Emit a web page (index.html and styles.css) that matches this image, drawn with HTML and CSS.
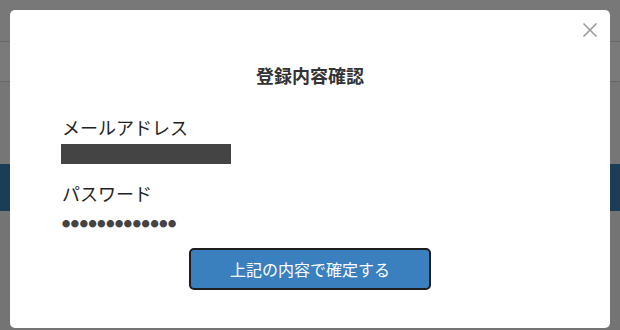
FILE: index.html
```html
<!DOCTYPE html>
<html lang="ja">
<head>
<meta charset="utf-8">
<link rel="stylesheet" href="styles.css">
</head>
<body>
<div class="page">
  <div class="hdr"></div>
  <div class="subhdr"></div>
  <div class="gap"></div>
  <div class="band"></div>
  <div class="rest"></div>
</div>
<div class="modal">
  <button class="close" aria-label="閉じる">
    <svg width="16" height="16" viewBox="0 0 16 16"><path d="M1.5 1.5L14.5 14.5M14.5 1.5L1.5 14.5" stroke="#9a9a9a" stroke-width="1.6" fill="none"/></svg>
  </button>
  <h2 class="title">登録内容確認</h2>
  <div class="label first">メールアドレス</div>
  <div class="redacted"></div>
  <div class="label second">パスワード</div>
  <div class="dots">●●●●●●●●●●●●●</div>
  <div class="actions"><button class="confirm">上記の内容で確定する</button></div>
</div>
</body>
</html>
```
FILE: styles.css
```css
html, body { margin: 0; padding: 0; }
body {
  width: 620px; height: 330px; overflow: hidden;
  background: #747474;
  font-family: "Noto Sans CJK JP", "Noto Sans", sans-serif;
  position: relative;
}
.page { display: flex; flex-direction: column; }
.hdr { height: 41px; background: #787878; border-bottom: 1px solid #676767; }
.subhdr { height: 39px; background: #7a7a7a; border-bottom: 1px solid #676767; }
.gap { height: 82px; background: #767676; }
.band { height: 47px; background: #1c3d56; }
.rest { height: 120px; background: #747474; }

.modal {
  position: absolute; left: 10px; top: 10px;
  width: 600px; height: 318px;
  background: #fff; border-radius: 5px;
  box-sizing: border-box;
  padding: 52px 52px 0;
  display: flex; flex-direction: column;
}
.close {
  position: absolute; right: 12px; top: 12px;
  width: 16px; height: 16px; padding: 0; border: 0; background: none;
  display: flex;
}
.title {
  margin: 0; text-align: center;
  font-size: 18px; line-height: 26px; font-weight: 700; color: #333;
}
.label { font-size: 18px; line-height: 26px; color: #222; }
.label.first { margin-top: 26px; }
.redacted { width: 170px; height: 20px; background: #444; margin-top: 4px; margin-left: -1px; }
.label.second { margin-top: 16px; }
.dots {
  margin-top: 9px; font-size: 8.2px; line-height: 16px; color: #444;
  letter-spacing: 0.65px;
}
.actions { display: flex; justify-content: center; margin-top: 17px; }
.confirm {
  width: 242px; height: 42px; box-sizing: border-box;
  background: #3a80bf; border: 2px solid #1e1e1e; border-radius: 5px;
  color: #fff; font-family: inherit; font-size: 16px; padding: 0;
}
```
